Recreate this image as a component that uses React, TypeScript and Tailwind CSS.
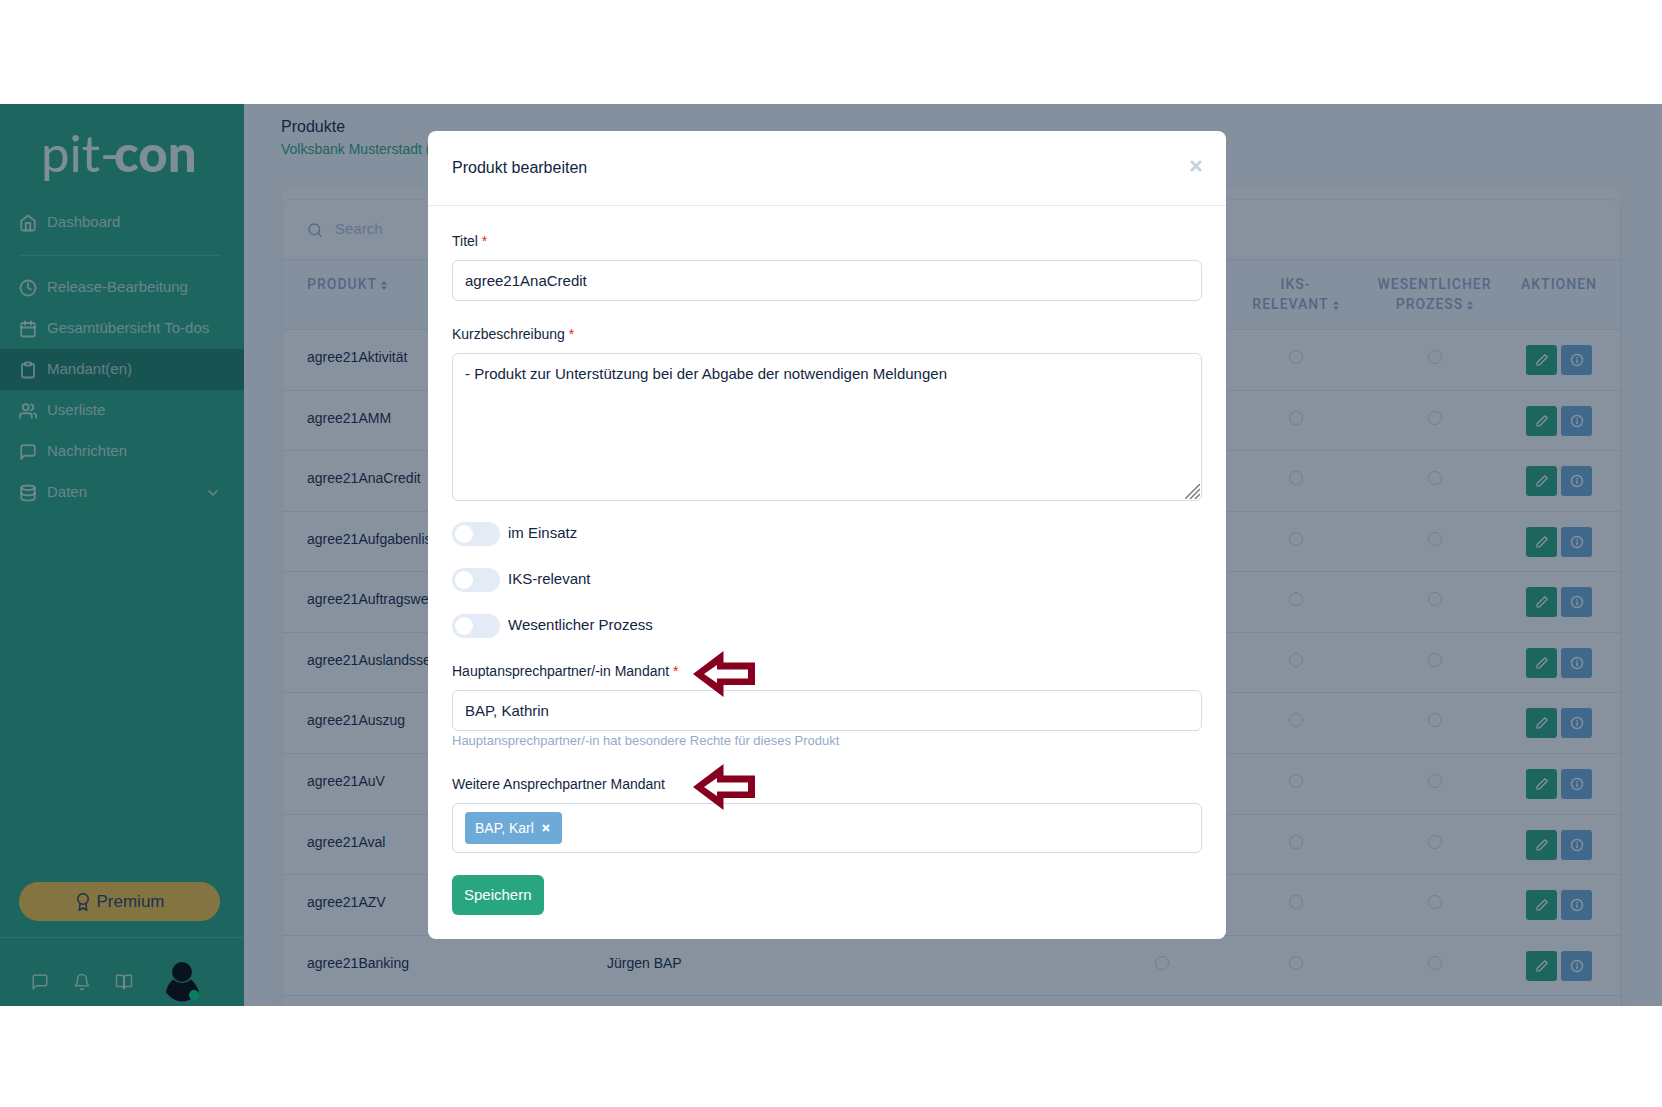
import {
  FiAward,
  FiBell,
  FiBookOpen,
  FiCalendar,
  FiChevronDown,
  FiClipboard,
  FiClock,
  FiDatabase,
  FiHome,
  FiMessageSquare,
  FiSearch,
  FiUsers,
} from "react-icons/fi";
import type { ReactNode } from "react";

const products = [
  "agree21Aktivität",
  "agree21AMM",
  "agree21AnaCredit",
  "agree21Aufgabenliste",
  "agree21Auftragswesen",
  "agree21Auslandsservice",
  "agree21Auszug",
  "agree21AuV",
  "agree21Aval",
  "agree21AZV",
  "agree21Banking",
  "",
];

const navItems = [
  { label: "Release-Bearbeitung", icon: FiClock },
  { label: "Gesamtübersicht To-dos", icon: FiCalendar },
  { label: "Mandant(en)", icon: FiClipboard, active: true },
  { label: "Userliste", icon: FiUsers },
  { label: "Nachrichten", icon: FiMessageSquare },
];

const Logo = () => (
  <svg
    viewBox="0 0 160 66"
    className="mx-auto h-[66px] w-[160px] overflow-visible text-white/90"
    fill="currentColor"
    fontFamily="Lato, sans-serif"
    role="img"
    aria-label="pit-con"
  >
    <text x="-1" y="48" fontSize="51" fontWeight="400">
      pit-
    </text>
    <text x="72" y="48" fontSize="51" fontWeight="900">
      con
    </text>
  </svg>
);

const Sidebar = () => {
  return (
    <nav className="flex w-[244px] shrink-0 flex-col bg-[#28a680] text-[15px] text-white/70">
      <div className="pt-5">
        <Logo />
      </div>
      <a href="#" className="mt-3 flex h-[41px] items-center gap-[10px] px-[19px]">
        <FiHome className="size-[18px]" strokeWidth={2.5} />
        Dashboard
      </a>
      <hr className="mt-3 mr-6 mb-[11px] ml-[19px] border-white/20" />
      {navItems.map(({ label, icon: Icon, active }) => (
        <a
          key={label}
          href="#"
          className={
            active
              ? "flex h-[41px] items-center gap-[10px] bg-[#1c8063] px-[19px]"
              : "flex h-[41px] items-center gap-[10px] px-[19px]"
          }
        >
          <Icon className="size-[18px]" strokeWidth={2.5} />
          {label}
        </a>
      ))}
      <a href="#" className="flex h-[41px] items-center gap-[10px] px-[19px]">
        <FiDatabase className="size-[18px]" strokeWidth={2.5} />
        Daten
        <FiChevronDown className="mr-1 ml-auto size-4" strokeWidth={2.5} />
      </a>

      <button className="mt-auto mr-6 ml-[19px] flex h-[39px] items-center justify-center gap-1 rounded-full bg-[#f6c343] text-[17px] text-[#283e59]">
        <FiAward className="size-[18px]" />
        Premium
      </button>
      <div className="mt-4 flex h-[69px] shrink-0 items-center border-t border-white/20 pt-5 pl-[31px]">
        <FiMessageSquare className="mr-6 size-[18px]" />
        <FiBell className="mr-6 size-[18px]" />
        <FiBookOpen className="size-[18px]" />
        <svg viewBox="0 0 34 42" className="ml-8 h-[42px] w-[34px]">
          <circle cx="17" cy="11" r="10" fill="#000" />
          <path
            d="M8 18.500q9 7 18 0q6 5 8 13q-8 9-17 9t-16-9q1-8 7-13z"
            fill="#000"
          />
          <circle cx="29" cy="34" r="5" fill="#00d97e" />
        </svg>
      </div>
    </nav>
  );
};

const SortIcon = () => (
  <svg viewBox="0 0 6 9" className="ml-1 inline h-[9px] w-[6px]" fill="currentColor">
    <path d="M3 0l3 3.600H0zM3 9l3-3.600H0z" />
  </svg>
);

const StatusCell = () => (
  <td className="pt-5 align-top">
    <span className="mx-auto block size-[14px] rounded-full border border-[#ccd2e2]" />
  </td>
);

const ProductTable = () => {
  return (
    <table className="h-[798px] w-full table-fixed border-collapse text-[14px] text-[#12263f]">
      <colgroup>
        <col className="w-[300px]" />
        <col />
        <col className="w-[116px]" />
        <col className="w-[151px]" />
        <col className="w-[127px]" />
        <col className="w-[122px]" />
      </colgroup>
      <thead>
        <tr className="h-[70px] border-y border-[#e3ebf6] bg-[#f9fbfd] align-top font-[Roboto,sans-serif] text-[14px] leading-5 tracking-[1px] text-[#95aac9]">
          <th className="pt-[14px] pl-6 text-left font-medium">
            PRODUKT
            <SortIcon />
          </th>
          <th />
          <th />
          <th className="pt-[14px] font-medium">
            IKS-
            <br />
            RELEVANT
            <SortIcon />
          </th>
          <th className="pt-[14px] font-medium">
            WESENTLICHER
            <br />
            PROZESS
            <SortIcon />
          </th>
          <th className="pt-[14px] font-medium">AKTIONEN</th>
        </tr>
      </thead>
      <tbody>
        {products.map((name) => (
          <tr key={name} className="border-b border-[#e3ebf6] align-top">
            <td className="pt-[17px] pl-6 leading-5">{name}</td>
            <td className="pt-[17px] pl-6 leading-5">
              {name === "agree21Banking" && "Jürgen BAP"}
            </td>
            <StatusCell />
            <StatusCell />
            <StatusCell />
            <td className="pt-[15px]">
              <div className="flex justify-center gap-1">
                <button
                  aria-label="Bearbeiten"
                  className="flex h-[30px] w-[31px] items-center justify-center rounded-[3px] bg-[#28a680] text-white"
                >
                  <svg
                    viewBox="0 0 12 12"
                    className="size-3"
                    fill="none"
                    stroke="currentColor"
                    strokeWidth="1.2"
                    strokeLinejoin="round"
                  >
                    <path d="M9 .8L11.200 3L3.500 11H1V8.500z" />
                  </svg>
                </button>
                <button
                  aria-label="Info"
                  className="flex h-[30px] w-[31px] items-center justify-center rounded-[3px] bg-[#6eaad7] text-white"
                >
                  <svg
                    viewBox="0 0 14 14"
                    className="size-[14px]"
                    fill="none"
                    stroke="currentColor"
                    strokeWidth="1.4"
                  >
                    <circle cx="7" cy="7" r="5.500" />
                    <path d="M7 6.500v3.500M7 4v1.400" />
                  </svg>
                </button>
              </div>
            </td>
          </tr>
        ))}
      </tbody>
    </table>
  );
};

const Required = () => <span className="text-[#e8202a]">*</span>;

const Arrow = () => (
  <svg viewBox="0 0 62 46" className="absolute -top-[10px] left-[241px] h-[46px] w-[62px]">
    <path d="M0 23L30.500 0V11.500H62V34H30.500V46z" fill="#880020" />
    <path d="M11 23L24 14V18.500H55V27.500H24V32z" fill="#fff" />
  </svg>
);

const Switch = ({ label }: { label: string }) => (
  <label className="flex h-[24px] items-center gap-2">
    <input
      type="checkbox"
      role="switch"
      className="h-[24px] w-[48px] appearance-none rounded-full bg-[#e3ebf6] before:mt-[3px] before:ml-[3px] before:block before:size-[18px] before:rounded-full before:bg-white checked:bg-[#28a680] checked:before:ml-[27px]"
    />
    <span className="pb-[2px]">{label}</span>
  </label>
);

const Label = ({ htmlFor, children }: { htmlFor: string; children: ReactNode }) => (
  <label htmlFor={htmlFor} className="block w-fit text-[14px] leading-5">
    {children}
  </label>
);

const EditModal = () => {
  return (
    <div className="absolute inset-0 overflow-hidden bg-[#12263f]/50 pt-[27px] pr-2">
      <div
        role="dialog"
        aria-labelledby="modal-title"
        className="mx-auto max-w-[798px] rounded-lg bg-white text-[15px] text-[#12263f]"
      >
        <div className="flex h-[75px] items-center justify-between border-b border-[#e3ebf6] px-6">
          <h2 id="modal-title" className="text-[16px]">
            Produkt bearbeiten
          </h2>
          <button aria-label="Schließen" className="pb-1 text-[#c8d2e1]">
            <svg
              viewBox="0 0 12 12"
              className="size-3"
              stroke="currentColor"
              strokeWidth="3"
              strokeLinecap="round"
            >
              <path d="M2 2l8 8M10 2l-8 8" />
            </svg>
          </button>
        </div>

        <form className="px-6 pt-[25px] pb-6">
          <Label htmlFor="title">
            Titel <Required />
          </Label>
          <input
            id="title"
            defaultValue="agree21AnaCredit"
            className="mt-[9px] block h-[41px] w-full rounded-md border border-[#d2ddec] px-3"
          />

          <div className="relative mt-[23px]">
            <Label htmlFor="description">
              Kurzbeschreibung <Required />
            </Label>
            <textarea
              id="description"
              defaultValue="- Produkt zur Unterstützung bei der Abgabe der notwendigen Meldungen"
              className="mt-[9px] block h-[148px] w-full resize-none rounded-md border border-[#d2ddec] px-3 py-[9px] leading-[22px]"
            />
            <svg
              viewBox="0 0 15 15"
              className="absolute right-[2px] bottom-[2px] size-[15px]"
              stroke="#7d7d7d"
              strokeWidth="1.5"
            >
              <path d="M0 15L15 0M5 15L15 5M10 15L15 10" />
            </svg>
          </div>

          <div className="mt-[21px] flex flex-col gap-[22px]">
            <Switch label="im Einsatz" />
            <Switch label="IKS-relevant" />
            <Switch label="Wesentlicher Prozess" />
          </div>

          <div className="relative mt-[23px]">
            <Label htmlFor="contact">
              Hauptansprechpartner/-in Mandant <Required />
            </Label>
            <input
              id="contact"
              defaultValue="BAP, Kathrin"
              className="mt-[9px] block h-[41px] w-full rounded-md border border-[#d2ddec] px-3"
            />
            <p className="text-[13px] leading-5 text-[#95aac9]">
              Hauptansprechpartner/-in hat besondere Rechte für dieses Produkt
            </p>
            <Arrow />
          </div>

          <div className="relative mt-[23px]">
            <Label htmlFor="more-contacts">Weitere Ansprechpartner Mandant</Label>
            <div className="mt-[9px] flex h-[50px] items-center rounded-md border border-[#d2ddec] px-3">
              <span className="flex h-[32px] items-center gap-2 rounded bg-[#6eaad7] pr-3 pl-[10px] text-[14px] text-white">
                BAP, Karl
                <button type="button" aria-label="Entfernen">
                  <svg
                    viewBox="0 0 8 8"
                    className="size-2"
                    stroke="currentColor"
                    strokeWidth="2"
                  >
                    <path d="M1 1l6 6M7 1l-6 6" />
                  </svg>
                </button>
              </span>
              <input id="more-contacts" className="ml-2 min-w-0 flex-1 outline-none" />
            </div>
            <Arrow />
          </div>

          <button
            type="button"
            className="mt-[22px] h-[40px] rounded-md bg-[#28a680] px-3 text-white"
          >
            Speichern
          </button>
        </form>
      </div>
    </div>
  );
};

export default function App() {
  return (
    <div className="flex h-screen flex-col bg-white pt-[104px] pb-[101px] font-[Liberation_Sans,Arial,sans-serif]">
      <div className="relative flex min-h-0 flex-1 overflow-hidden">
        <Sidebar />
        <main className="min-w-0 flex-1 overflow-hidden bg-[#f9fbfd] pt-[13px] pr-10 pl-[37px]">
          <h1 className="text-[16px] leading-5 text-[#12263f]">Produkte</h1>
          <p className="mt-[2px] text-[14px] leading-5 text-[#28a680]">
            Volksbank Musterstadt (
          </p>
          <div className="mt-7 rounded-lg border border-[#edf2f9] bg-white pt-[11px] shadow-[0_12px_24px_rgba(18,38,63,0.03)]">
            <div className="rounded-lg border border-[#edf2f9] bg-white">
              <div className="flex h-[59px] items-center px-6 text-[#95aac9]">
                <FiSearch className="mr-3 size-4" />
                <input
                  type="search"
                  aria-label="Search"
                  placeholder="Search"
                  className="text-[15px] outline-none placeholder:text-[#b1c2d9]"
                />
              </div>
              <ProductTable />
            </div>
          </div>
        </main>
        <EditModal />
      </div>
    </div>
  );
}
